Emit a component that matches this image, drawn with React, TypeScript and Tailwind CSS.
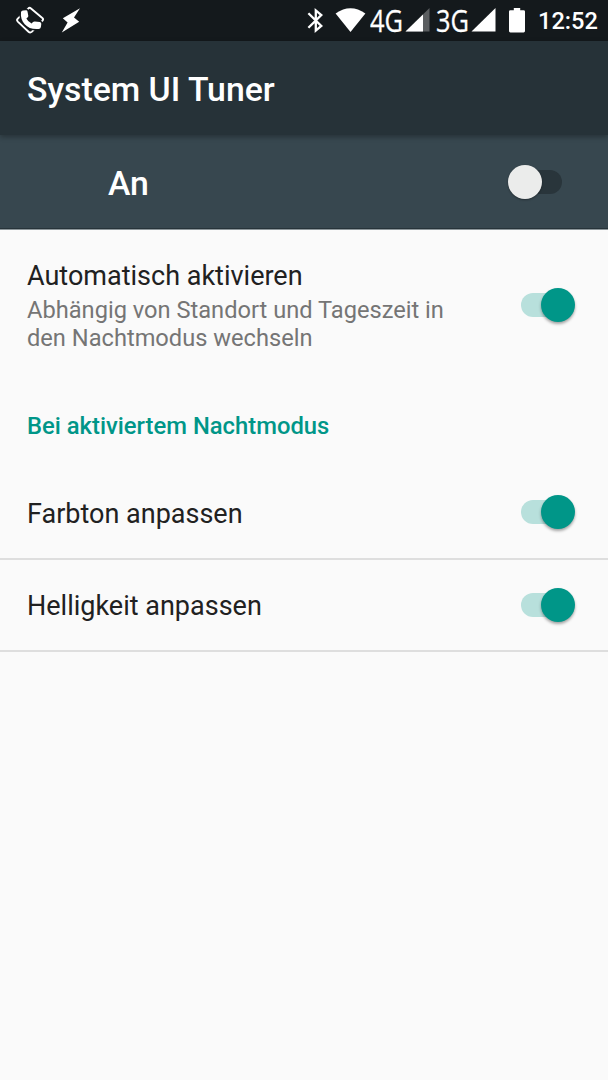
import clsx from "clsx";

type SwitchProps = {
  on: boolean;
};

const preferences = [
  { title: "Farbton anpassen", on: true },
  { title: "Helligkeit anpassen", on: true },
];

function Switch({ on }: SwitchProps) {
  return (
    <div
      role="switch"
      aria-checked={on}
      className={clsx("relative flex h-[34px] w-[54px] shrink-0 items-center", on ? "justify-end" : "justify-start")}
    >
      <span
        className={clsx(
          "absolute top-[5px] h-6 w-[41px] rounded-full",
          on ? "left-0 bg-[#b8e0dc]" : "right-0 bg-[#29353b]"
        )}
      />
      <span
        className={clsx(
          "relative size-[34px] rounded-full",
          on
            ? "bg-[#009688] shadow-[0_2px_3px_rgba(0,0,0,0.35)]"
            : "bg-[#ebeceb] shadow-[0_1px_2px_rgba(0,0,0,0.35)]"
        )}
      />
    </div>
  );
}

function CallIcon() {
  return (
    <svg className="ml-4 h-[41px] w-7" viewBox="16 0 28 41" fill="none">
      <path
        d="M28.2 8.6 Q29.5 7.2 31 8.4 L42.3 17.9 Q43.7 19.2 42.5 20.6 L32 31.6 Q30.2 33.2 28.5 31.7 L17.8 21.6 Q16.3 20.1 17.8 18.6 Z"
        stroke="#fff"
        strokeWidth="1.9"
      />
      <path
        d="M21 12.2 Q21.2 10.4 23 10.4 L26 10.2 Q27.3 10.2 27.5 11.4 L28.3 15.8 Q28.4 16.8 27.5 17.4 L26.4 18.4 Q28 21.8 31.6 23.4 L33 22.1 Q33.8 21.4 34.8 21.5 L39.8 22 Q41.5 22.3 41.3 24 L40.9 27 Q40.5 28.8 38.6 29 C28 30.2 19.8 22.5 21 12.2 Z"
        fill="#fff"
        stroke="#14191c"
        strokeWidth="3"
        paintOrder="stroke"
      />
    </svg>
  );
}

function BoltIcon() {
  return (
    <svg className="ml-[17px] h-[41px] w-5" viewBox="61 0 20 41" fill="#fff">
      <path d="M80 8.3 L62.8 18.3 L67.6 22.6 L61.8 32.6 L79.2 21.8 L74 17.6 Z" />
    </svg>
  );
}

function BluetoothIcon() {
  return (
    <svg className="h-[41px] w-4" viewBox="307 0 16 41" fill="none">
      <path
        d="M308.4 13.2 L321.3 26 L315.8 30.6 V10.4 L321.3 15 L308.4 27.8"
        stroke="#fff"
        strokeWidth="2.3"
      />
    </svg>
  );
}

function WifiIcon() {
  return (
    <svg className="ml-3 h-[41px] w-[31px]" viewBox="335 0 31 41" fill="#fff">
      <path d="M335.6 13.4 Q350.5 3 365.4 13.4 L350.5 32 Z" />
    </svg>
  );
}

type SignalProps = {
  label: string;
  weak?: boolean;
};

function Signal({ label, weak }: SignalProps) {
  return (
    <svg className="h-[41px] w-[61px]" viewBox="0 0 61 41" fill="#fff">
      <text
        x="0"
        y="32"
        textLength="33"
        lengthAdjust="spacingAndGlyphs"
        fontSize="31"
        fontFamily="'Open Sans', sans-serif"
        stroke="#fff"
        strokeWidth="0.3"
      >
        {label}
      </text>
      <path d="M35.5 31.5 L59.5 8 V31.5 Z" fill={weak ? "#5b5e60" : "#fff"} />
      {weak && <path d="M35.5 31.5 L53 14.4 V31.5 Z" />}
    </svg>
  );
}

function BatteryIcon() {
  return (
    <svg className="ml-3 h-[41px] w-4" viewBox="0 0 16 41" fill="#fff">
      <path d="M4.8 8 H11.2 V10.2 H14.6 Q16 10.2 16 11.6 V31 Q16 32.4 14.6 32.4 H1.4 Q0 32.4 0 31 V11.6 Q0 10.2 1.4 10.2 H4.8 Z" />
    </svg>
  );
}

function StatusBar() {
  return (
    <div className="flex h-[41px] justify-between bg-[#14191c] text-white">
      <div className="flex">
        <CallIcon />
        <BoltIcon />
      </div>
      <div className="flex pr-[10px]">
        <BluetoothIcon />
        <WifiIcon />
        <div className="ml-1 flex gap-[5px]">
          <Signal label="4G" weak />
          <Signal label="3G" />
        </div>
        <BatteryIcon />
        <span className="ml-[13px] w-[60px] pt-px text-[23.6px] leading-[41px] font-medium">12:52</span>
      </div>
    </div>
  );
}

export default function App() {
  return (
    <main className="flex min-h-[1080px] w-[608px] flex-col bg-[#fafafa] font-['Roboto',sans-serif] text-[#212121]">
      <StatusBar />
      <header className="relative flex h-[94px] items-center bg-[#263238] px-[27px] pt-1 shadow-[0_2px_5px_rgba(0,0,0,0.3)]">
        <h1 className="text-[33.8px] font-medium text-white">System UI Tuner</h1>
      </header>
      <div className="flex h-[94px] items-center justify-between border-b border-[#27343a] bg-[#37474f] pr-[46px] pl-[108px]">
        <span className="pt-1.5 text-[33.8px] font-medium text-white">An</span>
        <Switch on={false} />
      </div>

      <section className="flex h-[150px] items-center justify-between border-t border-[#8d979b] pr-[33px] pl-[27px]">
        <div className="w-[440px] pt-[3px]">
          <h2 className="text-[27px] leading-8">Automatisch aktivieren</h2>
          <p className="mt-[5px] text-[23.65px] leading-[27.5px] text-[#757575]">
            Abhängig von Standort und Tageszeit in den Nachtmodus wechseln
          </p>
        </div>
        <Switch on />
      </section>

      <h3 className="flex h-[88px] items-center px-[27px] pt-[7px] text-[23.8px] font-medium text-[#009688]">
        Bei aktiviertem Nachtmodus
      </h3>

      {preferences.map((preference) => (
        <section
          key={preference.title}
          className="flex h-[92.5px] items-center justify-between border-b-2 border-[#dedede] pr-[33px] pl-[27px]"
        >
          <h2 className="pt-[3px] text-[27px]">{preference.title}</h2>
          <Switch on={preference.on} />
        </section>
      ))}
    </main>
  );
}
